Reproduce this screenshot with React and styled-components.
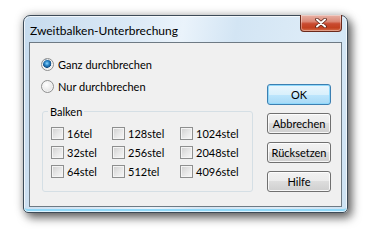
import styled, { createGlobalStyle } from 'styled-components'

const GlobalStyle = createGlobalStyle`
  html, body {
    margin: 0;
    background: #ffffff;
  }
  body {
    font-family: Lato, "Noto Sans", "Liberation Sans", sans-serif;
    font-size: 11px;
    color: #000;
  }
`

const checks = [
  ['16tel', '128stel', '1024stel'],
  ['32stel', '256stel', '2048stel'],
  ['64stel', '512tel', '4096stel'],
]

function CloseGlyph() {
  return (
    <svg width="12" height="10" viewBox="0 0 12 10">
      <path d="M2 1.5 L10 8.5 M10 1.5 L2 8.5" stroke="#5a2418" strokeWidth="3.6" strokeLinecap="round" />
      <path d="M2 1.5 L10 8.5 M10 1.5 L2 8.5" stroke="#ffffff" strokeWidth="2" strokeLinecap="round" />
    </svg>
  )
}

export default function App() {
  return (
    <Page>
      <GlobalStyle />
      <Window>
        <TitleBar>
          <Title>Zweitbalken-Unterbrechung</Title>
          <CloseButton>
            <CloseGlyph />
          </CloseButton>
        </TitleBar>
        <Client>
          <LeftColumn>
            <RadioRow>
              <Radio checked />
              <span>Ganz durchbrechen</span>
            </RadioRow>
            <RadioRow>
              <Radio />
              <span>Nur durchbrechen</span>
            </RadioRow>
            <GroupBox>
              <Legend>Balken</Legend>
              <CheckGrid>
                {checks.flat().map((label) => (
                  <CheckRow key={label}>
                    <CheckBox />
                    <span>{label}</span>
                  </CheckRow>
                ))}
              </CheckGrid>
            </GroupBox>
          </LeftColumn>
          <ButtonColumn>
            <Button primary>OK</Button>
            <Button>Abbrechen</Button>
            <Button>Rücksetzen</Button>
            <Button>Hilfe</Button>
          </ButtonColumn>
        </Client>
      </Window>
    </Page>
  )
}

const Page = styled.div`
  width: 387px;
  height: 241px;
  padding: 15px 0 0 23px;
  box-sizing: border-box;
  background: #fff;
`

const Window = styled.div`
  width: 325px;
  height: 198px;
  box-sizing: border-box;
  border: 1px solid #3d4b58;
  border-radius: 7px 7px 5px 5px;
  background: linear-gradient(
    100deg,
    #c6dbee 0%,
    #dbe9f6 30%,
    #eaf3fb 45%,
    #d3e5f4 60%,
    #dcebf7 80%,
    #cde2f3 100%
  );
  box-shadow:
    inset 0 0 0 1px rgba(255, 255, 255, 0.7),
    inset 0 -3px 0 #8fd8f8,
    4px 5px 10px rgba(0, 0, 0, 0.55),
    0 0 10px rgba(0, 0, 0, 0.25);
  display: flex;
  flex-direction: column;
`

const TitleBar = styled.div`
  height: 26px;
  display: flex;
  align-items: center;
  justify-content: space-between;
  padding-left: 6px;
  padding-right: 5px;
`

const Title = styled.div`
  font-size: 12px;
  color: #000;
  padding-top: 2px;
`

const CloseButton = styled.div`
  align-self: flex-start;
  margin-top: -1px;
  width: 42px;
  height: 17px;
  box-sizing: border-box;
  border: 1px solid #6b2a1c;
  border-top: none;
  border-radius: 0 0 4px 4px;
  background: linear-gradient(
    #e8b2a6 0%,
    #dc8a78 40%,
    #c94a30 55%,
    #c2401f 80%,
    #d7714e 100%
  );
  box-shadow: inset 0 0 0 1px rgba(255, 255, 255, 0.35);
  display: flex;
  align-items: center;
  justify-content: center;
`

const Client = styled.div`
  flex: 1;
  margin: 0 5px 5px;
  border: 1px solid #6e7a84;
  background: #f0f0f0;
  display: flex;
`

const LeftColumn = styled.div`
  display: flex;
  flex-direction: column;
  padding: 10px 0 0 11px;
`

const RadioRow = styled.label`
  display: flex;
  align-items: center;
  gap: 4px;
  height: 22px;
`

const Radio = styled.span`
  width: 13px;
  height: 13px;
  box-sizing: border-box;
  border-radius: 50%;
  border: 1px solid #8e8f8f;
  background: ${({ checked }) =>
    checked
      ? 'radial-gradient(circle at 45% 40%, #8fd6ff 0%, #2a86c8 25%, #144f86 46%, #e9e9e9 52%, #f6f6f6 100%)'
      : 'radial-gradient(circle at 40% 35%, #ffffff 0%, #ececec 50%, #d4d4d4 100%)'};
  box-shadow: inset 0 0 0 1px #f4f4f4;
`

const GroupBox = styled.fieldset`
  margin: 7px 0 0 1px;
  padding: 0 0 10px 8px;
  width: 211px;
  box-sizing: border-box;
  border: 1px solid #d5dfe5;
  border-radius: 3px;
`

const Legend = styled.legend`
  margin-left: -3px;
  padding: 0 2px;
  line-height: 15px;
`

const CheckGrid = styled.div`
  display: grid;
  grid-template-columns: 61px 68px auto;
  padding-top: 5px;
`

const CheckRow = styled.label`
  display: flex;
  align-items: center;
  gap: 3px;
  height: 19px;
`

const CheckBox = styled.span`
  width: 13px;
  height: 13px;
  box-sizing: border-box;
  border: 1px solid #8e8f8f;
  background: linear-gradient(135deg, #cfcfcf 0%, #e6e6e6 50%, #f8f8f8 100%);
  box-shadow: inset 0 0 0 1px #f4f4f4;
`

const ButtonColumn = styled.div`
  display: flex;
  flex-direction: column;
  gap: 8px;
  padding: 41px 0 0 14px;
`

const Button = styled.div`
  width: 64px;
  height: 21px;
  box-sizing: border-box;
  border: 1px solid ${({ primary }) => (primary ? '#3c7fb1' : '#707070')};
  border-radius: 3px;
  display: flex;
  align-items: center;
  justify-content: center;
  font-size: 11px;
  background: ${({ primary }) =>
    primary
      ? 'linear-gradient(#eaf6fd 0%, #d9f0fc 50%, #bee6fd 50%, #a7d9f5 100%)'
      : 'linear-gradient(#f2f2f2 0%, #ebebeb 50%, #dddddd 50%, #cfcfcf 100%)'};
  box-shadow: inset 0 0 0 1px
    ${({ primary }) => (primary ? '#8fd8fb' : 'rgba(255, 255, 255, 0.8)')};
`
